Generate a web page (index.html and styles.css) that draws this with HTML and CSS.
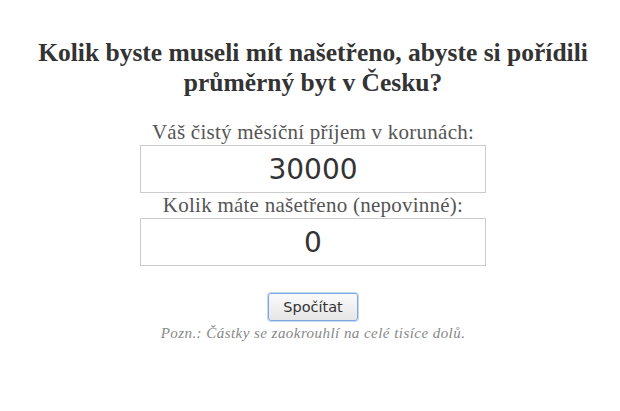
FILE: index.html
```html
<!DOCTYPE html>
<html lang="cs">
<head>
<meta charset="utf-8">
<title>Kalkulačka</title>
<link rel="stylesheet" href="styles.css">
</head>
<body>
<main class="page">
  <h1 class="title">Kolik byste museli mít našetřeno, abyste si pořídili průměrný byt v Česku?</h1>
  <form class="form">
    <label class="label" for="income">Váš čistý měsíční příjem v korunách:</label>
    <input class="field" id="income" type="text" value="30000">
    <label class="label" for="savings">Kolik máte našetřeno (nepovinné):</label>
    <input class="field" id="savings" type="text" value="0">
    <button class="btn" type="button">Spočítat</button>
    <p class="note">Pozn.: Částky se zaokrouhlí na celé tisíce dolů.</p>
  </form>
</main>
</body>
</html>
```
FILE: styles.css
```css
html, body {
  margin: 0;
  padding: 0;
  background: #fff;
}
.page {
  padding: 38px 0 0 6px;
  display: flex;
  flex-direction: column;
  align-items: center;
  font-family: "Liberation Serif", "Times New Roman", serif;
}
.title {
  margin: 0;
  width: 580px;
  text-align: center;
  font-size: 25.5px;
  line-height: 30px;
  font-weight: bold;
  color: #333;
}
.form {
  margin-top: 22px;
  display: flex;
  flex-direction: column;
  align-items: center;
}
.label {
  font-size: 21px;
  line-height: 25px;
  letter-spacing: 0.25px;
  color: #555;
}
.field {
  box-sizing: border-box;
  width: 346px;
  height: 48px;
  margin: 0;
  padding: 0;
  border: 1px solid #ccc;
  text-align: center;
  font-family: "DejaVu Sans", Verdana, sans-serif;
  font-size: 28px;
  color: #333;
  outline: none;
}
.btn {
  margin-top: 27px;
  box-sizing: border-box;
  width: 90px;
  height: 28px;
  padding: 0;
  font-family: "DejaVu Sans", Verdana, sans-serif;
  font-size: 14.5px;
  color: #333;
  background: linear-gradient(#fafafa, #e6e6e6);
  border: 1px solid #7fa8e0;
  border-radius: 3px;
  box-shadow: 0 0 0 1px #c5d8f3;
}
.note {
  margin: 3px 0 0;
  font-size: 15px;
  line-height: 18px;
  letter-spacing: 0.45px;
  font-style: italic;
  color: #888;
}
```
